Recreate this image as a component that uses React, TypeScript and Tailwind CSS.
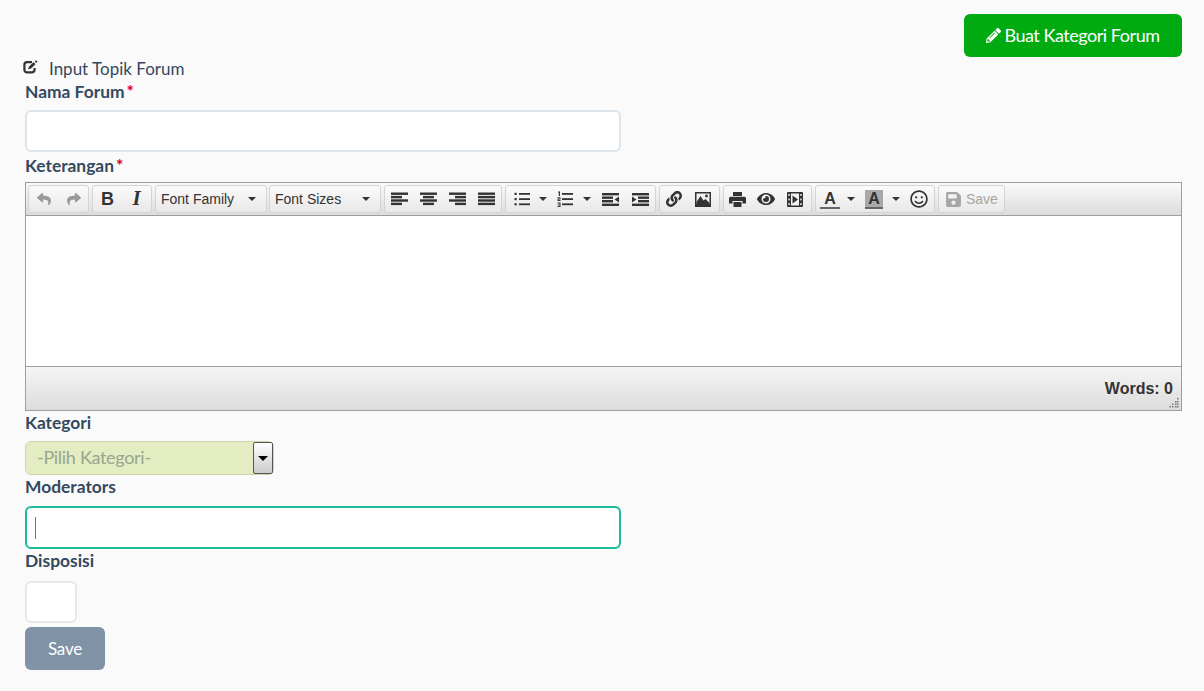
import type { ReactNode } from 'react';
import { FaEye, FaLink, FaPencilAlt, FaRegSmile, FaReply, FaSave, FaShare } from 'react-icons/fa';

function Group({ children, className = '' }: { children: ReactNode; className?: string }) {
  return (
    <div className={`flex h-[28px] items-center rounded-[3px] border border-[#d4d4d4] bg-gradient-to-b from-[#fbfbfb] to-[#e8e8e8] ${className}`}>
      {children}
    </div>
  );
}

function Btn({ children, className = 'w-[29px]' }: { children: ReactNode; className?: string }) {
  return <div className={`flex h-full shrink-0 items-center justify-center ${className}`}>{children}</div>;
}

function Caret() {
  return <span className="h-0 w-0 border-x-[4px] border-t-[4px] border-x-transparent border-t-[#333]" />;
}

function Lines({ rows }: { rows: [number, number][] }) {
  return (
    <svg width="17" height="14" viewBox="0 0 17 14" fill="#333">
      {rows.map(([x, w], i) => (
        <rect key={i} x={x} y={i * 3.4 + 0.5} width={w} height="2.4" />
      ))}
    </svg>
  );
}

function ListIcon({ numbered }: { numbered?: boolean }) {
  return (
    <svg width="16" height="16" viewBox="0 0 16 16" fill="#333">
      <rect x="5" y="2" width="11" height="1.8" />
      <rect x="5" y="7.2" width="11" height="1.8" />
      <rect x="5" y="12.4" width="11" height="1.8" />
      {numbered ? (
        <>
          <path d="M1 0.5h2v4.5h-1.2v-3.4h-0.8z" />
          <path d="M0.5 6.2h3v2.2h-2v0.6h2v1h-3v-2.2h2v-0.6h-2z" />
          <path d="M0.5 11.6h3v4.4h-3v-1h2v-0.7h-2v-0.9h2v-0.8h-2z" />
        </>
      ) : (
        <>
          <rect x="0.5" y="1.8" width="2.2" height="2.2" />
          <rect x="0.5" y="7" width="2.2" height="2.2" />
          <rect x="0.5" y="12.2" width="2.2" height="2.2" />
        </>
      )}
    </svg>
  );
}

function IndentIcon({ right }: { right?: boolean }) {
  return (
    <svg width="17" height="13" viewBox="0 0 17 13" fill="#333">
      <rect x="0" y="0" width="17" height="2.4" />
      <rect x="0" y="10.6" width="17" height="2.4" />
      <rect x={right ? 6 : 0} y="3.5" width="11" height="2.4" />
      <rect x={right ? 6 : 0} y="7" width="11" height="2.4" />
      {right ? <polygon points="0,3.5 4.5,6.5 0,9.5" /> : <polygon points="17,3.5 12.5,6.5 17,9.5" />}
    </svg>
  );
}

function ImageIcon() {
  return (
    <svg width="16" height="15" viewBox="0 0 16 15">
      <rect width="16" height="15" fill="#333" />
      <rect x="1.5" y="1.5" width="13" height="10.5" fill="#f1f1f1" />
      <path d="M1.5 13 L1.5 10 L5.5 4 L8.5 8.5 L10.5 7 L14.5 11 V13 Z" fill="#333" />
      <circle cx="11.5" cy="4" r="1.4" fill="#333" />
    </svg>
  );
}

function PrintIcon() {
  return (
    <svg width="17" height="15" viewBox="0 0 17 15" fill="#333">
      <rect x="4" y="0" width="9" height="4" />
      <path d="M1.5 4.8h14a1.5 1.5 0 0 1 1.5 1.5V11.5h-3.5V9h-10v2.5H0V6.3a1.5 1.5 0 0 1 1.5-1.5z" />
      <rect x="4.5" y="10" width="8" height="5" />
    </svg>
  );
}

function MediaIcon() {
  return (
    <svg width="16" height="15" viewBox="0 0 16 15">
      <rect width="16" height="15" rx="1" fill="#333" />
      <rect x="4" y="1.5" width="8" height="12" fill="#f1f1f1" />
      <polygon points="5.5,3.5 11,7.5 5.5,11.5" fill="#333" />
      <rect x="1.3" y="2" width="1.5" height="1.8" fill="#f1f1f1" />
      <rect x="1.3" y="6.6" width="1.5" height="1.8" fill="#f1f1f1" />
      <rect x="1.3" y="11.2" width="1.5" height="1.8" fill="#f1f1f1" />
      <rect x="13.2" y="2" width="1.5" height="1.8" fill="#f1f1f1" />
      <rect x="13.2" y="6.6" width="1.5" height="1.8" fill="#f1f1f1" />
      <rect x="13.2" y="11.2" width="1.5" height="1.8" fill="#f1f1f1" />
    </svg>
  );
}

function EditIcon() {
  return (
    <svg width="15" height="14" viewBox="0 0 15 14" fill="none" stroke="#333" className="mb-[4px] shrink-0">
      <path d="M9 2.2H4a2.6 2.6 0 0 0-2.6 2.6v5a2.6 2.6 0 0 0 2.6 2.6h5a2.6 2.6 0 0 0 2.6-2.6V8" strokeWidth="2.2" />
      <path d="M5.5 8.8l1.2-2.6L10.6 2.6l1.6 1.6L8.2 8z" fill="#333" strokeWidth="0.8" />
      <path d="M12.4 0.8l1.5 1.5" strokeWidth="1.8" />
    </svg>
  );
}

function Label({ children, required }: { children: ReactNode; required?: boolean }) {
  return (
    <div className="h-[22px] text-[17.4px] leading-[24px] font-bold text-[#34495e]">
      {children}
      {required && <span className="ml-[2px] text-[#e0000f]">*</span>}
    </div>
  );
}

function Toolbar() {
  return (
    <div className="flex h-[33px] items-center gap-[2px] border-b border-[#9e9e9e] bg-gradient-to-b from-[#fafafa] to-[#dcdcdc] pl-[2px] font-['Liberation_Sans',sans-serif] text-[14px] text-[#333]">
      <Group className="w-[61px] text-[#9a9a9a]">
        <Btn className="w-[30px]"><FaReply size={14} /></Btn>
        <Btn><FaShare size={14} /></Btn>
      </Group>
      <Group className="ml-[1px] w-[60px]">
        <Btn className="w-[29px] text-[18px] font-bold">B</Btn>
        <Btn className="w-[29px] font-['Liberation_Serif',serif] text-[21px] font-bold italic">I</Btn>
      </Group>
      <Group className="ml-[1px] w-[112px] justify-between pr-[10px] pl-[5px]">
        <span>Font Family</span>
        <Caret />
      </Group>
      <Group className="w-[112px] justify-between pr-[10px] pl-[5px]">
        <span>Font Sizes</span>
        <Caret />
      </Group>
      <Group className="ml-[1px] w-[118px]">
        <Btn><Lines rows={[[0, 17], [0, 11], [0, 17], [0, 11]]} /></Btn>
        <Btn><Lines rows={[[0, 17], [3, 11], [0, 17], [3, 11]]} /></Btn>
        <Btn><Lines rows={[[0, 17], [6, 11], [0, 17], [6, 11]]} /></Btn>
        <Btn><Lines rows={[[0, 17], [0, 17], [0, 17], [0, 17]]} /></Btn>
      </Group>
      <Group className="ml-[1px] w-[151px]">
        <Btn className="w-[31px]"><ListIcon /></Btn>
        <Btn className="w-[12px]"><Caret /></Btn>
        <Btn className="w-[32px]"><ListIcon numbered /></Btn>
        <Btn className="w-[12px]"><Caret /></Btn>
        <Btn className="w-[33px] pl-[2px]"><IndentIcon /></Btn>
        <Btn><IndentIcon right /></Btn>
      </Group>
      <Group className="ml-[1px] w-[61px]">
        <Btn className="w-[28px]"><FaLink size={16} /></Btn>
        <Btn><ImageIcon /></Btn>
      </Group>
      <Group className="ml-[1px] w-[89px]">
        <Btn className="w-[27px]"><PrintIcon /></Btn>
        <Btn><FaEye size={18} /></Btn>
        <Btn><MediaIcon /></Btn>
      </Group>
      <Group className="ml-[1px] w-[120px]">
        <Btn className="w-[28px]">
          <span className="flex flex-col items-center text-[16px] leading-[17px] font-bold">
            A
            <span className="h-[2px] w-[20px] bg-[#666]" />
          </span>
        </Btn>
        <Btn className="w-[13px]"><Caret /></Btn>
        <Btn className="w-[34px]">
          <span className="flex flex-col items-center bg-[#a9a9a9] text-[16px] leading-[17px] font-bold">
            <span className="px-[2px]">A</span>
            <span className="h-[2px] w-[18px] bg-[#666]" />
          </span>
        </Btn>
        <Btn className="w-[10px]"><Caret /></Btn>
        <Btn className="w-[33px] pl-[3px]"><FaRegSmile size={18} /></Btn>
      </Group>
      <Group className="ml-[1px] w-[67px] gap-[4px] pl-[6px] text-[#a6a6a6]">
        <FaSave size={17} />
        <span>Save</span>
      </Group>
    </div>
  );
}

function Editor() {
  return (
    <div className="border border-[#9e9e9e] bg-white">
      <Toolbar />
      <div className="h-[150px] bg-white" />
      <div className="relative flex h-[44px] items-center justify-end border-t border-[#9e9e9e] bg-gradient-to-b from-[#f5f5f5] to-[#dcdcdc] pt-[1px] pr-[8px] font-['Liberation_Sans',sans-serif] text-[16px] font-bold text-[#333]">
        Words: 0
        <svg className="absolute right-[2px] bottom-[2px]" width="10" height="10" viewBox="0 0 10 10" fill="#777">
          <rect x="8" y="0" width="1.5" height="1.5" />
          <rect x="6" y="3" width="1.5" height="1.5" />
          <rect x="8" y="3" width="1.5" height="1.5" />
          <rect x="3" y="5.5" width="1.5" height="1.5" />
          <rect x="6" y="5.5" width="1.5" height="1.5" />
          <rect x="8" y="5.5" width="1.5" height="1.5" />
          <rect x="0.5" y="8" width="1.5" height="1.5" />
          <rect x="3" y="8" width="1.5" height="1.5" />
          <rect x="6" y="8" width="1.5" height="1.5" />
          <rect x="8" y="8" width="1.5" height="1.5" />
        </svg>
      </div>
    </div>
  );
}

export default function App() {
  return (
    <div className="h-[691px] overflow-hidden bg-[#fafafa] pt-[14px] pr-[22px] pl-[25px] font-['Lato',sans-serif] text-[#34495e]">
      <div className="flex justify-end">
        <button className="flex h-[43px] w-[218px] items-center justify-center gap-[3px] rounded-[6px] bg-[#00ab11] text-[18px] tracking-[-0.46px] text-white">
          <FaPencilAlt size={15} />
          Buat Kategori Forum
        </button>
      </div>
      <div className="-ml-[2px] flex h-[23px] items-center gap-[11px] text-[17px] leading-[23px]">
        <EditIcon />
        Input Topik Forum
      </div>
      <Label required>Nama Forum</Label>
      <div className="mt-[8px] h-[42px] w-[596px] rounded-[6px] border-2 border-[#dce4ec] bg-white" />
      <div className="mt-[2px]"><Label required>Keterangan</Label></div>
      <div className="mt-[6px]"><Editor /></div>
      <Label>Kategori</Label>
      <div className="mt-[8px] flex h-[34px] w-[249px] items-center justify-between rounded-[6px] border border-[#cdd6a8] bg-[#e4edc2] pl-[11px] text-[18px] tracking-[-0.3px] text-[#98a58f]">
        <span className="mb-[2px]">-Pilih Kategori-</span>
        <span className="flex h-[32px] w-[20px] items-center justify-center rounded-[2px] border border-[#555] bg-gradient-to-b from-[#fff] to-[#ccc]">
          <span className="h-0 w-0 border-x-[5px] border-t-[5px] border-x-transparent border-t-black" />
        </span>
      </div>
      <Label>Moderators</Label>
      <div className="mt-[9px] flex h-[43px] w-[596px] items-center rounded-[6px] border-2 border-[#1abc9c] bg-white pl-[8px]">
        <span className="h-[22px] w-[1px] bg-[#777]" />
      </div>
      <Label>Disposisi</Label>
      <div className="mt-[10px] h-[42px] w-[52px] rounded-[6px] border-2 border-[#e4e9ee] bg-white" />
      <button className="mt-[4px] h-[43px] w-[80px] rounded-[6px] bg-[#7f92a6] text-[17px] tracking-[-0.2px] text-white">Save</button>
    </div>
  );
}
